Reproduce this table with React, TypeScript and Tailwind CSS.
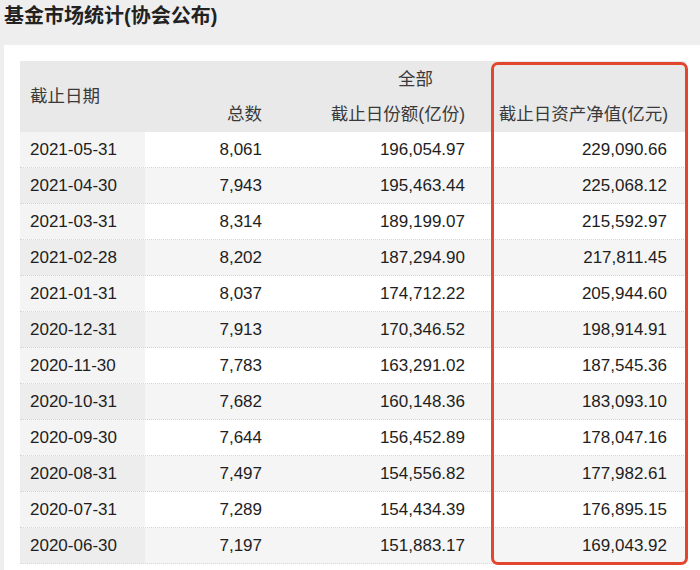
import React from "react";

const rows: [string, string, string, string][] = [
  ["2021-05-31", "8,061", "196,054.97", "229,090.66"],
  ["2021-04-30", "7,943", "195,463.44", "225,068.12"],
  ["2021-03-31", "8,314", "189,199.07", "215,592.97"],
  ["2021-02-28", "8,202", "187,294.90", "217,811.45"],
  ["2021-01-31", "8,037", "174,712.22", "205,944.60"],
  ["2020-12-31", "7,913", "170,346.52", "198,914.91"],
  ["2020-11-30", "7,783", "163,291.02", "187,545.36"],
  ["2020-10-31", "7,682", "160,148.36", "183,093.10"],
  ["2020-09-30", "7,644", "156,452.89", "178,047.16"],
  ["2020-08-31", "7,497", "154,556.82", "177,982.61"],
  ["2020-07-31", "7,289", "154,434.39", "176,895.15"],
  ["2020-06-30", "7,197", "151,883.17", "169,043.92"],
];

export default function App() {
  return (
    <div
      className="w-[700px] h-[570px] overflow-hidden bg-[#eeeeee]"
      style={{ fontFamily: '"Liberation Sans", Arial, "Noto Sans CJK SC", sans-serif' }}
    >
      <div className="h-[45px] pl-[4px] pt-[2px] text-[20px] font-bold leading-[28px] text-[#222]">
        基金市场统计(协会公布)
      </div>
      <div className="ml-[4px] bg-white pl-[16px] pt-[16px] pb-[10px]">
        <div className="relative w-[666px]">
          <div className="grid grid-cols-[125px_130px_205px_206px] bg-[#e9e9e9] text-[17.5px] text-[#3a3a3a]">
            <div className="row-span-2 flex items-center pl-[10px] h-[71px]">截止日期</div>
            <div className="col-span-3 h-[35px] flex items-end justify-center pb-[4px]">全部</div>
            <div className="h-[36px] flex items-center justify-end pr-[13px]">总数</div>
            <div className="h-[36px] flex items-center justify-end pr-[15px]">截止日份额(亿份)</div>
            <div className="h-[36px] flex items-center justify-end pr-[18px]">截止日资产净值(亿元)</div>
          </div>
          {rows.map((r, i) => {
            const odd = i % 2 === 1;
            return (
              <div
                key={r[0]}
                className={
                  "grid grid-cols-[125px_130px_205px_206px] h-[36px] text-[17px] text-[#1e1e1e] border-b border-dotted " +
                  (i === rows.length - 1 ? "border-[#d8d8d8] " : "border-[#d4d4d4] ") +
                  (odd ? "bg-[#f5f5f5]" : "bg-white")
                }
              >
                <div className={"flex items-center pl-[10px] " + (odd ? "bg-[#ededed]" : "bg-[#f4f4f4]")}>
                  {r[0]}
                </div>
                <div className="flex items-center justify-end pr-[13px]">{r[1]}</div>
                <div className="flex items-center justify-end pr-[15px]">{r[2]}</div>
                <div className="flex items-center justify-end pr-[19px]">{r[3]}</div>
              </div>
            );
          })}
          <div className="absolute left-[471px] top-[1px] w-[197px] h-[503px] border-[3px] border-[#e2462f] rounded-[7px] pointer-events-none" />
        </div>
      </div>
    </div>
  );
}
